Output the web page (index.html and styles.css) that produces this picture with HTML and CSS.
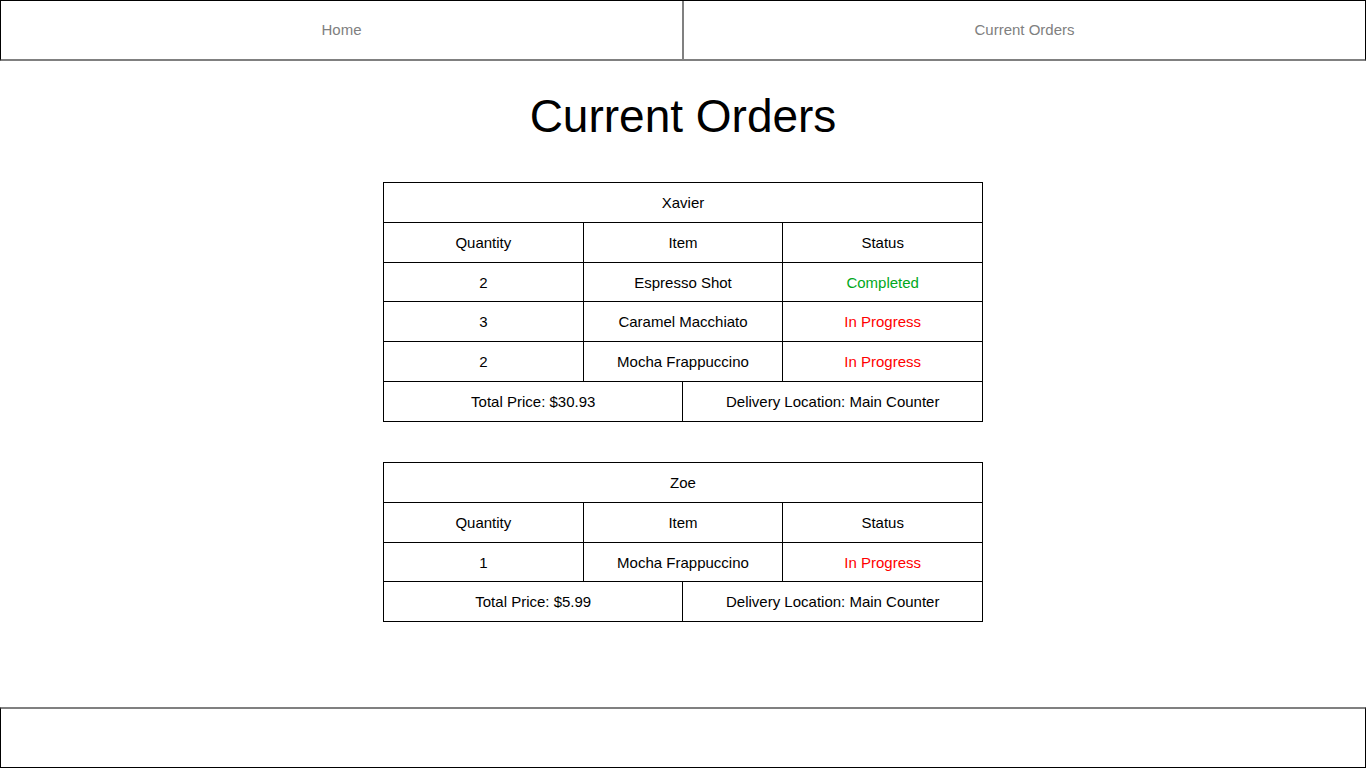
FILE: index.html
```html
<!DOCTYPE html>
<html lang="en">
<head>
<meta charset="utf-8">
<title>Current Orders</title>
<link rel="stylesheet" href="styles.css">
</head>
<body>
<nav class="nav">
  <a class="nav-link" href="#home">Home</a>
  <a class="nav-link" href="#orders">Current Orders</a>
</nav>
<main class="main">
  <h1 class="title">Current Orders</h1>
  <table class="order">
    <thead>
      <tr><th colspan="6">Xavier</th></tr>
      <tr><th colspan="2">Quantity</th><th colspan="2">Item</th><th colspan="2">Status</th></tr>
    </thead>
    <tbody>
      <tr><td colspan="2">2</td><td colspan="2">Espresso Shot</td><td colspan="2" class="done">Completed</td></tr>
      <tr><td colspan="2">3</td><td colspan="2">Caramel Macchiato</td><td colspan="2" class="pending">In Progress</td></tr>
      <tr><td colspan="2">2</td><td colspan="2">Mocha Frappuccino</td><td colspan="2" class="pending">In Progress</td></tr>
    </tbody>
    <tfoot>
      <tr><td colspan="3">Total Price: $30.93</td><td colspan="3">Delivery Location: Main Counter</td></tr>
    </tfoot>
  </table>
  <table class="order">
    <thead>
      <tr><th colspan="6">Zoe</th></tr>
      <tr><th colspan="2">Quantity</th><th colspan="2">Item</th><th colspan="2">Status</th></tr>
    </thead>
    <tbody>
      <tr><td colspan="2">1</td><td colspan="2">Mocha Frappuccino</td><td colspan="2" class="pending">In Progress</td></tr>
    </tbody>
    <tfoot>
      <tr><td colspan="3">Total Price: $5.99</td><td colspan="3">Delivery Location: Main Counter</td></tr>
    </tfoot>
  </table>
</main>
<footer class="footer"></footer>
</body>
</html>
```
FILE: styles.css
```css
* { box-sizing: border-box; }
body {
  margin: 0;
  min-height: 100vh;
  display: flex;
  flex-direction: column;
  font-family: "Liberation Sans", Arial, sans-serif;
  font-size: 15px;
  color: #000;
  background: #fff;
}
.nav {
  display: grid;
  grid-template-columns: 1fr 1fr;
  border: 1px solid #000;
  border-bottom: 2px solid #808080;
}
.nav-link {
  line-height: 58px;
  text-align: center;
  color: #808080;
  text-decoration: none;
}
.nav-link:first-child { border-right: 1px solid #808080; }
.nav-link:last-child { border-left: 1px solid #808080; }
.main {
  flex: 1;
  display: flex;
  flex-direction: column;
  align-items: center;
  padding: 28px 16px 40px;
}
.title {
  margin: 0 0 38px;
  font-size: 46px;
  font-weight: 400;
  line-height: 55px;
}
.order {
  width: 100%;
  max-width: 600px;
  margin-bottom: 40px;
  table-layout: fixed;
  border-collapse: collapse;
}
.order th, .order td {
  height: 40px;
  padding: 0;
  border: 1px solid #000;
  font-weight: 400;
  text-align: center;
}
.order tbody tr:first-child td { height: 39px; }
.order .done { color: #00a81c; }
.order .pending { color: #ff0000; }
.footer {
  height: 61px;
  border: 1px solid #000;
  border-top: 2px solid #808080;
}
```
